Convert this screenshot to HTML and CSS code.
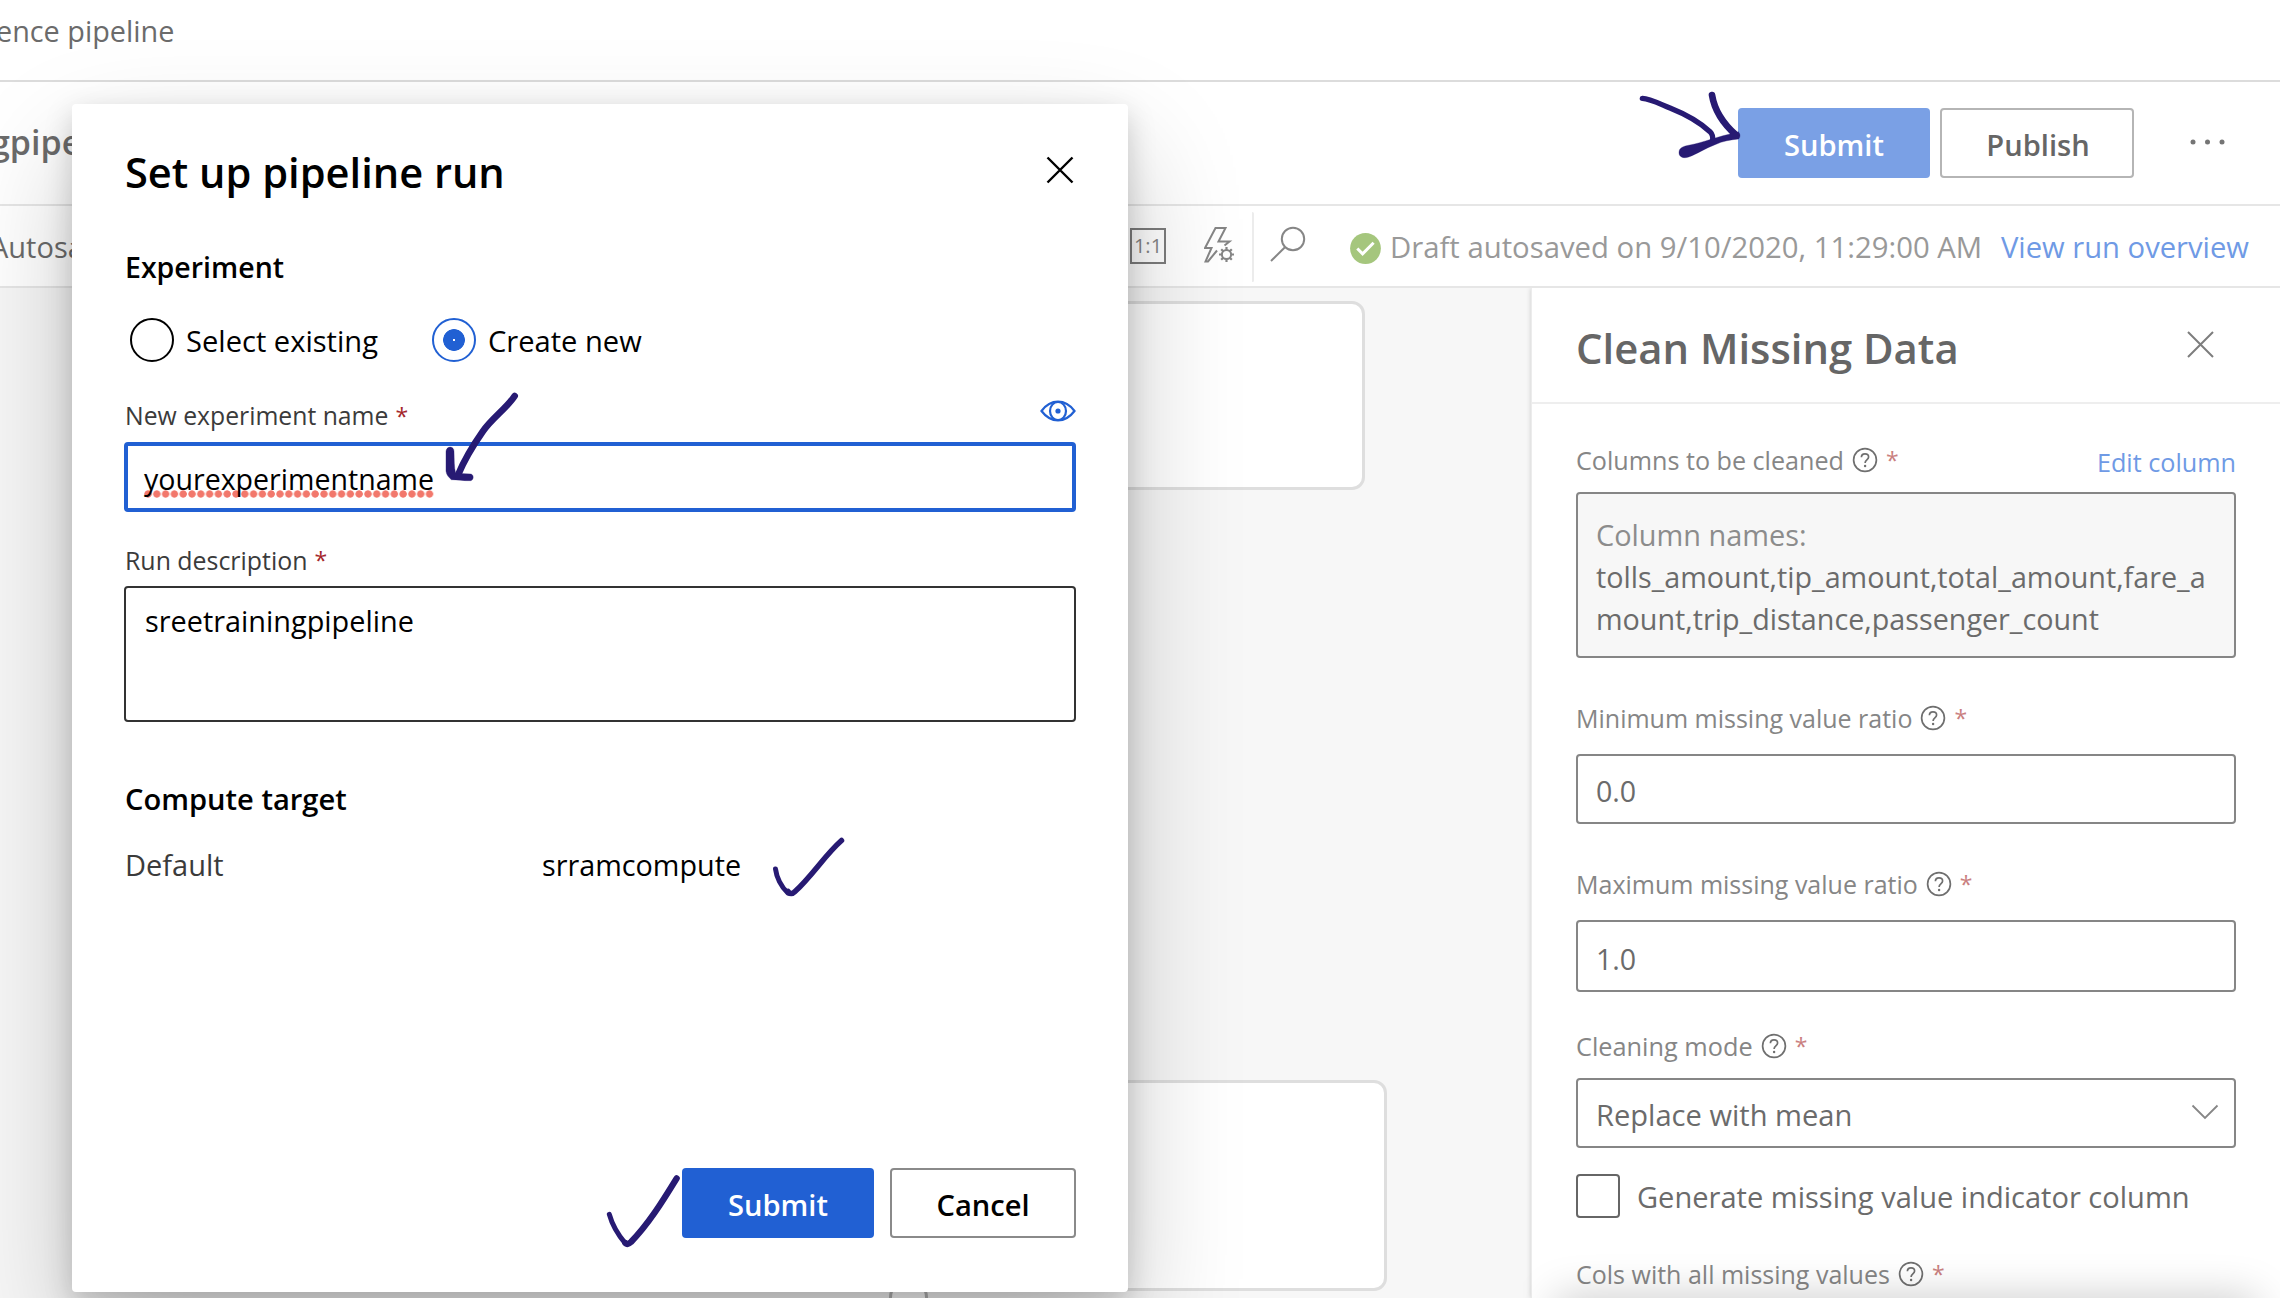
FILE: index.html
```
<!DOCTYPE html>
<html lang="en">
<head>
<meta charset="utf-8">
<title>Set up pipeline run</title>
<link rel="stylesheet" href="styles.css">
</head>
<body>
<svg class="defs" width="0" height="0">
  <symbol id="help" viewBox="0 0 26 26">
    <circle cx="13" cy="13" r="11.4" fill="none" stroke="currentColor" stroke-width="1.7"/>
    <path d="M9.4 10.3C9.4 8 11 6.8 13 6.8s3.6 1.2 3.6 3.2c0 2.9-3.5 3-3.5 5.9" fill="none" stroke="currentColor" stroke-width="1.7"/>
    <circle cx="13.1" cy="19" r="1.2" fill="currentColor"/>
  </symbol>
</svg>

<header class="crumbs"><span>ence pipeline</span></header>

<div class="titlebar">
  <span class="draft-name">gpipeline</span>
  <div class="actions">
    <button class="btn primary faded">Submit</button>
    <button class="btn outline faded">Publish</button>
    <svg class="more" width="36" height="8" viewBox="0 0 36 8"><circle cx="4" cy="4" r="2.5"/><circle cx="18.5" cy="4" r="2.5"/><circle cx="33" cy="4" r="2.5"/></svg>
  </div>
</div>

<div class="toolbar">
  <span class="autosave">Autosave</span>
  <div class="tools">
    <span class="one-to-one">1:1</span>
    <svg class="bolt" width="32" height="38" viewBox="0 0 32 38" fill="none" stroke="#868686" stroke-width="2">
      <path d="M13 24.500 4 35.500H1.500L7.500 22H1L11.500 2H21.500L14.500 15.500H25.500L20.500 19.500"/>
      <circle cx="22.5" cy="28.5" r="4.6"/>
      <path d="M22.5 21v3M22.5 33v3M15 28.5h3M27 28.5h3M17.2 23.2l2.1 2.1M25.7 31.7l2.1 2.1M27.8 23.2l-2.1 2.1M19.3 31.7l-2.1 2.1" stroke-width="2.2"/>
    </svg>
    <span class="divider"></span>
    <svg class="search" width="36" height="36" viewBox="0 0 36 36" fill="none" stroke="#868686" stroke-width="2"><circle cx="23" cy="13" r="11.2"/><path d="M15.2 21 1 35"/></svg>
    <svg class="saved" width="31" height="31" viewBox="0 0 31 31"><circle cx="15.5" cy="15.5" r="15.4" fill="#a5c67d"/><path d="M7.3 15.5l5.3 5.3L23.6 9.8" fill="none" stroke="#fff" stroke-width="3"/></svg>
    <span class="status">Draft autosaved on 9/10/2020, 11:29:00 AM</span>
    <a class="link overview">View run overview</a>
  </div>
</div>

<main class="workspace">
  <section class="canvas">
    <div class="node node-top"></div>
    <div class="node node-bottom"></div>
    <div class="port"></div>
  </section>

  <aside class="panel">
    <div class="panel-head">
      <h2>Clean Missing Data</h2>
      <svg width="27" height="27" viewBox="0 0 27 27"><path d="M1 1 26 26M26 1 1 26" stroke="#7d7d7d" stroke-width="2"/></svg>
    </div>
    <div class="panel-body">
      <div class="label-row columns-label"><span>Columns to be cleaned</span><svg class="help"><use href="#help"/></svg><i>*</i><a class="link edit">Edit column</a></div>
      <div class="columns-box"><span class="muted">Column names:</span><br>tolls_amount,tip_amount,total_amount,fare_a<br>mount,trip_distance,passenger_count</div>

      <div class="label-row min-label"><span>Minimum missing value ratio</span><svg class="help"><use href="#help"/></svg><i>*</i></div>
      <div class="field min-field">0.0</div>

      <div class="label-row max-label"><span>Maximum missing value ratio</span><svg class="help"><use href="#help"/></svg><i>*</i></div>
      <div class="field max-field">1.0</div>

      <div class="label-row mode-label"><span>Cleaning mode</span><svg class="help"><use href="#help"/></svg><i>*</i></div>
      <div class="field mode-field">Replace with mean<svg width="28" height="16" viewBox="0 0 28 16"><path d="M1.5 1.5 14 14 26.500 1.500" fill="none" stroke="#868686" stroke-width="1.8"/></svg></div>

      <div class="check-row"><span class="checkbox"></span><span class="check-text">Generate missing value indicator column</span></div>

      <div class="label-row cols-label"><span>Cols with all missing values</span><svg class="help"><use href="#help"/></svg><i>*</i></div>
    </div>
    <div class="panel-fade"></div>
  </aside>
</main>

<div class="modal" role="dialog">
  <div class="modal-head">
    <h1>Set up pipeline run</h1>
    <svg width="28" height="28" viewBox="0 0 28 28"><path d="M1.500 1.500 26.500 26.500M26.500 1.500 1.500 26.500" stroke="#000" stroke-width="2.4"/></svg>
  </div>
  <h3 class="experiment">Experiment</h3>
  <div class="radios">
    <span class="radio"></span><span class="radio-text">Select existing</span>
    <span class="radio on"></span><span class="radio-text">Create new</span>
  </div>
  <div class="form-label name-label">New experiment name<i>*</i>
    <svg class="eye" width="36" height="22" viewBox="0 0 36 22" fill="none" stroke="#2160d3" stroke-width="2.2"><path d="M1.500 11C6 5 11.500 1.700 18 1.700S30 5 34.500 11C30 17 24.500 20.300 18 20.300S6 17 1.500 11z"/><ellipse cx="18" cy="11" rx="8" ry="9"/><circle cx="18" cy="11" r="2.600" fill="#2160d3" stroke="none"/></svg>
  </div>
  <div class="name-input"><span class="misspelled">yourexperimentname</span></div>
  <div class="form-label desc-label">Run description<i>*</i></div>
  <div class="desc-input">sreetrainingpipeline</div>
  <h3 class="compute">Compute target</h3>
  <div class="compute-row"><span class="compute-key">Default</span><span class="compute-name">srramcompute</span></div>
  <div class="modal-foot">
    <button class="btn primary">Submit</button>
    <button class="btn outline">Cancel</button>
  </div>
</div>

<!-- hand-drawn marks over the page -->
<svg class="ink" width="2280" height="1298" viewBox="0 0 2280 1298">
  <g transform="translate(1630 84) scale(.33333)">
    <path d="M37 43C60 44 90 60 120 72 170 92 215 120 240 143c10 10 10 18 7 30" stroke-width="16"/>
    <path d="M246 33C252 70 275 115 318 153" stroke-width="20"/>
    <path class="fill" d="M325 144c6 6 7 14 1 21-22 2-48 6-71 17-28 10-56 29-79 37-14 5-29 1-29-13 0-15 12-19 33-23 38-7 76-24 145-39z"/>
  </g>
  <g transform="translate(430 380) scale(.33333)">
    <path d="M254 48C230 85 185 115 158 155 130 195 105 235 84 285" stroke-width="20"/>
    <path class="fill" d="M48 214c1-17 24-17 24 0 1 25 0 48 5 66l46 2c9 3 9 18-1 20-18 1-38-3-58-3-8-7-14-13-16-25z"/>
  </g>
  <path d="M775.500 869C776.500 877 781 887 788 893" stroke-width="5"/>
  <path d="M788 891.500q3 4 7 0C812 876 825 855 841.500 840.500" stroke-width="5.500"/>
  <g transform="translate(600 1150) scale(.33333)">
    <path d="M28 193C36 222 54 254 76 280" stroke-width="15"/>
    <path d="M76 279q6 7 17-3C145 222 184 160 230 85" stroke-width="19"/>
  </g>
</svg>
</body>
</html>
```
FILE: styles.css
```
* { box-sizing: border-box; }
body {
  margin: 0;
  width: 2280px;
  height: 1298px;
  overflow: hidden;
  position: relative;
  display: flex;
  flex-direction: column;
  background: #fff;
  color: #000;
  font-family: "Open Sans", "Noto Sans", sans-serif;
  font-size: 29px;
  line-height: 40px;
  white-space: nowrap;
}
h1, h2, h3 { margin: 0; font-weight: 600; }
svg { display: block; flex: none; }
i { font-style: normal; }
.defs { position: absolute; }
.link { color: #6f9ae5; }

/* page header */
.crumbs {
  flex: none;
  height: 82px;
  padding-top: 11px;
  border-bottom: 2px solid #dcdcdc;
  color: #6b6b6b;
}
.crumbs span { margin-left: -4px; font-size: 28.800px; }
.titlebar {
  flex: none;
  height: 124px;
  border-bottom: 2px solid #e6e6e6;
  display: flex;
  justify-content: space-between;
}
.draft-name {
  margin: 40px 0 0 -9px;
  font-size: 34px;
  font-weight: 600;
  color: #6b6b6b;
}
.actions { display: flex; padding: 26px 55px 0 0; }
.btn {
  height: 70px;
  padding: 3px 0 0;
  border: 0;
  border-radius: 4px;
  font: 600 29.100px/40px "Open Sans", "Noto Sans", sans-serif;
}
.btn.primary { width: 192px; background: #2160d3; color: #fff; }
.btn.outline { width: 186px; background: #fff; border: 2px solid #8a8a8a; color: #000; }
.btn.primary.faded { background: #7aa0e5; }
.btn.outline.faded { width: 194px; margin-left: 10px; padding-left: 2px; border-color: #b5b5b5; color: #666; }
.more { margin: 30px 0 0 55px; fill: #757575; }

/* toolbar */
.toolbar {
  flex: none;
  height: 82px;
  border-bottom: 2px solid #e6e6e6;
  display: flex;
  align-items: center;
}
.autosave { flex: none; width: 1140px; margin-left: -10px; padding-top: 1px; color: #6b6b6b; }
.tools { flex: 1; height: 80px; display: flex; align-items: center; padding-right: 31px; }
.one-to-one {
  width: 36px;
  height: 36px;
  border: 2px solid #7d7d7d;
  font: 20px/32px "Open Sans", sans-serif;
  text-align: center;
  color: #868686;
}
.bolt { margin: -3px 0 0 38px; }
.divider { width: 3px; height: 70px; margin-left: 15px; border-right: 2px solid #ececec; border-radius: 4px; margin-top: 1px; }
.search { margin: -4px 0 0 16px; }
.saved { margin: 4px 0 0 44px; }
.status { margin: 1px 0 0 9px; font-size: 29.300px; color: #999; }
.overview { margin: 1px 0 0 auto; font-size: 29.200px; }

/* workspace */
.workspace { flex: 1; min-height: 0; display: flex; }
.canvas { flex: 1; position: relative; background: #f7f7f7; overflow: hidden; }
.node {
  position: absolute;
  border: 3px solid #dedede;
  border-radius: 13px;
  background: #fff;
}
.node-top { left: 452px; top: 13px; width: 913px; height: 189px; }
.node-bottom { left: 432px; top: 792px; width: 955px; height: 211px; }
.port {
  position: absolute;
  left: 889px;
  top: 990px;
  width: 39px;
  height: 39px;
  border: 3px solid #b4b4b4;
  border-radius: 50%;
  background: #fff;
}

/* properties panel */
.panel {
  flex: none;
  width: 749px;
  position: relative;
  background: #fff;
  border-left: 1px solid #ececec;
  box-shadow: 0 0 5px rgba(0, 0, 0, .18);
  clip-path: inset(0 0 0 -8px);
}
.panel-head {
  height: 116px;
  padding: 32px 66px 0 44px;
  border-bottom: 2px solid #eee;
  display: flex;
  justify-content: space-between;
}
.panel-head h2 { font-size: 41.800px; line-height: 56px; color: #666; }
.panel-head svg { margin-top: 11px; }
.panel-body { padding: 0 44px; display: flex; flex-direction: column; }
.label-row {
  height: 36px;
  display: flex;
  align-items: flex-start;
  font-size: 25px;
  line-height: 36px;
  color: #868686;
}
.label-row i { margin-left: 8px; font-size: 23px; color: #ca8080; }
.help { width: 26px; height: 26px; margin: 5px 0 0 8px; color: #6f6f6f; }
.edit { margin: 2px 0 0 auto; font-size: 25.200px; }
.columns-label { margin-top: 38px; font-size: 25.150px; }
.columns-box {
  height: 166px;
  margin-top: 14px;
  padding: 20px 18px 0;
  border: 2px solid #868686;
  border-radius: 4px;
  background: #f7f7f7;
  font-size: 28.720px;
  line-height: 42px;
  color: #6b6b6b;
}
.muted { color: #8c8c8c; font-size: 28.900px; }
.field {
  height: 70px;
  padding: 4px 18px 0;
  border: 2px solid #868686;
  border-radius: 4px;
  display: flex;
  align-items: center;
  justify-content: space-between;
  font-size: 28.600px;
  color: #6b6b6b;
}
.min-label { margin-top: 42px; }
.min-field { margin-top: 18px; }
.max-label { margin-top: 42px; }
.max-field { margin-top: 18px; height: 72px; padding-top: 5px; }
.mode-label { margin-top: 36px; font-size: 25.300px; }
.mode-field { margin-top: 14px; font-size: 29.100px; padding-right: 15px; }
.mode-field svg { margin-top: -6px; }
.check-row { margin-top: 26px; height: 44px; display: flex; }
.checkbox { width: 44px; height: 44px; border: 2px solid #666; border-radius: 4px; }
.check-text { margin: 3px 0 0 17px; font-size: 29.050px; color: #6b6b6b; }
.cols-label { margin-top: 38px; }
.panel-fade {
  position: absolute;
  left: 30px;
  right: 30px;
  bottom: -36px;
  height: 30px;
  box-shadow: 0 0 44px 6px rgba(0, 0, 0, .22);
}

/* modal */
.modal {
  position: absolute;
  left: 72px;
  top: 104px;
  width: 1056px;
  height: 1188px;
  padding: 40px 52px 54px;
  display: flex;
  flex-direction: column;
  background: #fff;
  border-radius: 4px;
  box-shadow: 0 51px 115px rgba(0, 0, 0, .22), 0 10px 29px rgba(0, 0, 0, .18);
}
.modal-head { display: flex; justify-content: space-between; padding: 0 2px 0 1px; }
.modal-head h1 { font-size: 41.600px; line-height: 56px; }
.modal-head svg { margin-top: 12px; }
.modal h3 { padding-left: 1px; font-size: 28.500px; line-height: 40px; }
.modal .experiment { margin-top: 47px; }
.radios { display: flex; margin-top: 31px; padding-left: 6px; height: 44px; }
.radio { width: 44px; height: 44px; border: 2px solid #000; border-radius: 50%; }
.radio.on {
  margin-left: 54px;
  border-color: #2160d3;
  background: radial-gradient(circle, #fff 1px, #2160d3 1.500px 10.500px, #fff 11.200px);
}
.radio-text { margin: 3px 0 0 12px; font-size: 29.100px; }
.form-label {
  height: 36px;
  display: flex;
  padding-left: 1px;
  font-size: 24.900px;
  line-height: 36px;
  color: #3b3b3b;
}
.form-label i { margin-left: 7px; font-size: 23px; color: #a4262c; }
.name-label { margin-top: 36px; font-size: 24.750px; }
.eye { margin: 2px 0 0 auto; }
.name-input {
  height: 70px;
  margin-top: 8px;
  padding: 4px 16px 0;
  border: 4px solid #2160d3;
  border-radius: 4px;
  display: flex;
  align-items: center;
  font-size: 28.550px;
}
.misspelled {
  background: radial-gradient(circle at 4px 4px, #f2786c 3.300px, transparent 4px) 0 31px / 8.800px 8px repeat-x;
}
.desc-label { margin-top: 30px; }
.desc-input {
  height: 136px;
  margin-top: 8px;
  padding: 13px 19px 0;
  border: 2px solid #333;
  border-radius: 4px;
  font-size: 28.850px;
}
.modal .compute { margin-top: 57px; font-size: 29.100px; }
.compute-row { display: flex; margin-top: 26px; padding-left: 1px; }
.compute-key { width: 417px; color: #3b3b3b; }
.compute-name { font-size: 28.750px; }
.modal-foot { margin-top: auto; display: flex; justify-content: flex-end; gap: 16px; }

/* pen marks */
.ink { position: absolute; left: 0; top: 0; fill: none; stroke: #271a73; stroke-linecap: round; stroke-linejoin: round; }
.ink .fill { fill: #271a73; stroke-width: 1; }
```
